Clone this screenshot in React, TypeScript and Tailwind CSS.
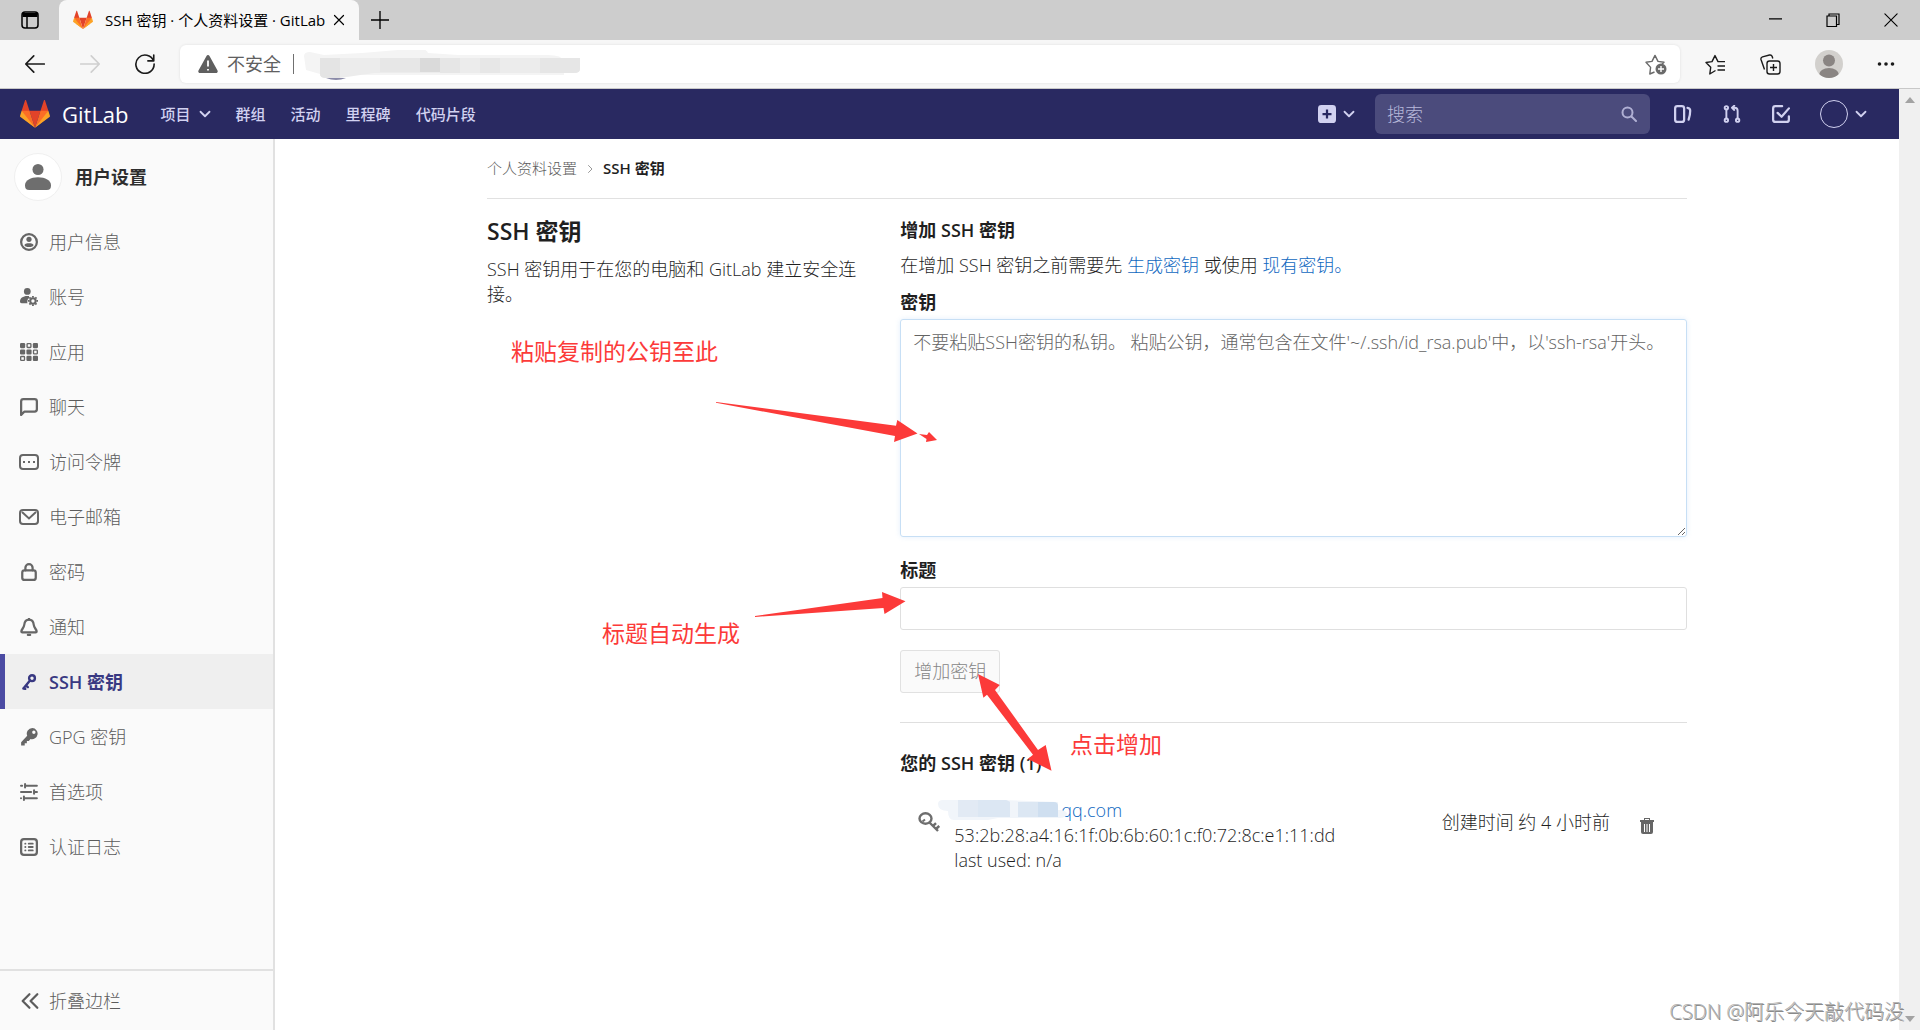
import type { ReactNode } from 'react';

const Tanuki = ({ className }: { className: string }) => (
    <svg viewBox="0 0 36 36" className={className} aria-hidden="true">
        <path fill="#e24329" d="M2 14l9.38 9v-9l-4-12.28c-.205-.632-1.176-.632-1.38 0z" />
        <path fill="#e24329" d="M34 14l-9.38 9v-9l4-12.28c.205-.632 1.176-.632 1.38 0z" />
        <path fill="#e24329" d="M18,34.38 11.38,14 24.62,14Z" />
        <path fill="#fc6d26" d="M18,34.38 11.38,14 2,14 6,25Z" />
        <path fill="#fc6d26" d="M18,34.38 24.62,14 34,14 30,25Z" />
        <path fill="#fca326" d="M2 14L.1 20.16c-.18.565 0 1.2.5 1.56l17.42 12.66z" />
        <path fill="#fca326" d="M34 14l1.9 6.16c.18.565 0 1.2-.5 1.56L18 34.38z" />
    </svg>
);

const Icon = ({ children, className = 'size-[18px]' }: { children: ReactNode; className?: string }) => (
    <svg viewBox="0 0 16 16" className={`shrink-0 ${className}`} fill="currentColor" aria-hidden="true">
        {children}
    </svg>
);

const Line = ({ children, className = 'size-[18px]', width = 2 }: { children: ReactNode; className?: string; width?: number }) => (
    <svg
        viewBox="0 0 16 16"
        className={`shrink-0 ${className}`}
        fill="none"
        stroke="currentColor"
        strokeWidth={width}
        strokeLinecap="round"
        strokeLinejoin="round"
        aria-hidden="true"
    >
        {children}
    </svg>
);

const Chevron = () => (
    <Line className="size-3" width={2.4}>
        <path d="M2 5l6 6 6-6" />
    </Line>
);

const sidebarLinks = [
    {
        name: '用户信息',
        icon: (
            <Icon>
                <circle cx="8" cy="8" r="7" fill="none" stroke="currentColor" strokeWidth="2" />
                <circle cx="8" cy="5.6" r="2.3" />
                <path d="M4 10.6C4 9.4 5.8 9 8 9s4 .4 4 1.6S10.2 12.5 8 12.5s-4-.7-4-1.9z" />
            </Icon>
        ),
    },
    {
        name: '账号',
        icon: (
            <Icon>
                <circle cx="6.5" cy="3" r="3" />
                <path d="M6.5 7C2.5 7 0 9 0 12c0 1 .5 1.5 1.5 1.5h5.2c-.6-1.5-.3-3.5 1.3-4.7V7z" />
                <circle cx="11.5" cy="11.5" r="2.4" fill="none" stroke="currentColor" strokeWidth="1.8" />
                <path
                    d="M11.5 7v9M7 11.5h9M8.3 8.3l6.4 6.4M14.7 8.3l-6.4 6.4"
                    fill="none"
                    stroke="currentColor"
                    strokeWidth="1.6"
                    strokeDasharray="1.4 6.2 1.4"
                />
            </Icon>
        ),
    },
    {
        name: '应用',
        icon: (
            <Icon>
                <rect width="4.6" height="4.6" rx="1" />
                <rect x="11.4" width="4.6" height="4.6" rx="1" />
                <rect y="5.7" width="4.6" height="4.6" rx="1" />
                <rect x="5.7" y="5.7" width="4.6" height="4.6" rx="1" />
                <rect x="5.7" y="11.4" width="4.6" height="4.6" rx="1" />
                <rect x="11.4" y="11.4" width="4.6" height="4.6" rx="1" />
                <g fill="none" stroke="currentColor" strokeWidth="1.2">
                    <rect x="6.3" y=".6" width="3.4" height="3.4" rx=".6" />
                    <rect x="12" y="6.3" width="3.4" height="3.4" rx=".6" />
                    <rect x=".6" y="12" width="3.4" height="3.4" rx=".6" />
                </g>
            </Icon>
        ),
    },
    {
        name: '聊天',
        icon: (
            <Line>
                <path d="M1 15V3a2 2 0 0 1 2-2h10a2 2 0 0 1 2 2v7a2 2 0 0 1-2 2H4z" />
            </Line>
        ),
    },
    {
        name: '访问令牌',
        icon: (
            <svg viewBox="0 0 20 16" className="h-4 w-5" fill="currentColor" aria-hidden="true">
                <rect x="1" y="1" width="18" height="14" rx="3" fill="none" stroke="currentColor" strokeWidth="2" />
                <rect x="4" y="7" width="2" height="2" />
                <rect x="9" y="7" width="2" height="2" />
                <rect x="14" y="7" width="2" height="2" />
            </svg>
        ),
    },
    {
        name: '电子邮箱',
        icon: (
            <svg viewBox="0 0 20 16" className="h-4 w-5" fill="none" stroke="currentColor" strokeWidth="2" aria-hidden="true">
                <rect x="1" y="1" width="18" height="14" rx="3" />
                <path d="M3 3l7 6.500L17 3" />
            </svg>
        ),
    },
    {
        name: '密码',
        icon: (
            <Line>
                <rect x="2" y="6.5" width="12" height="8.5" rx="2" />
                <path d="M4.8 6.5V4.200a3.200 3.200 0 0 1 6.400 0v2.300" />
            </Line>
        ),
    },
    {
        name: '通知',
        icon: (
            <Line>
                <path d="M8 1.5C5 1.5 4 4 3.8 6 3.5 9 1.2 10 1.2 12c0 .6.3.8.9.8h11.8c.6 0 .9-.2.9-.8 0-2-2.3-3-2.600-6C12 4 11 1.5 8 1.5z" />
                <path d="M7 15h2M8 .8v.7" />
            </Line>
        ),
    },
    {
        name: 'SSH 密钥',
        icon: (
            <Line className="size-4" width={2.4}>
                <circle cx="11" cy="4.2" r="2.9" />
                <path d="M9 6.5l-6.600 8M5 11.5l1.800 1.600M2.800 13.800l1.400 1.200" />
            </Line>
        ),
    },
    {
        name: 'GPG 密钥',
        icon: (
            <Icon>
                <path
                    fillRule="evenodd"
                    d="M11 0a5 5 0 0 0-4.6 6.9L1 12.600V15.500h3.200v-1.900h1.900v-2h1.800l1.400-1.800A5 5 0 1 0 11 0zm1.300 2.300a1.500 1.500 0 1 1 0 3 1.500 1.500 0 0 1 0-3z"
                />
            </Icon>
        ),
    },
    {
        name: '首选项',
        icon: (
            <Line width={1.8}>
                <path d="M.9 2.500h1M5 2.500h10M.9 8h9M13.500 8h1.600M.9 13.500h0M4 13.500h11M4.500 1v3M12.500 6.500v3M3.500 12v3" />
            </Line>
        ),
    },
    {
        name: '认证日志',
        icon: (
            <Line>
                <rect x="1" y="1" width="14" height="14" rx="2.5" />
                <path d="M4.700 5h.1M7.800 5h3.500M4.700 8h.1M7.800 8h3.500M4.700 11h.1M7.800 11h3.500" strokeWidth="1.7" />
            </Line>
        ),
    },
];

const BrowserTabs = () => (
    <div className="flex h-10 shrink-0 items-center bg-[#cdcdcd] text-black">
        <button aria-label="标签页操作" className="flex w-[59px] justify-center">
            <svg viewBox="0 0 18 18" className="size-[18px]" fill="none" stroke="black" strokeWidth="1.5">
                <rect x="1" y="1" width="16" height="16" rx="3" />
                <path d="M1.5 4h15" strokeWidth="4" />
                <path d="M6 6v11" />
            </svg>
        </button>
        <div className="flex h-full w-[300px] items-center rounded-t-lg bg-[#f7f7f7] px-[14px]">
            <Tanuki className="size-5 shrink-0" />
            <span className="ml-3 flex-1 text-[15px] whitespace-nowrap">SSH 密钥 · 个人资料设置 · GitLab</span>
            <button aria-label="关闭标签页">
                <Line className="size-3" width={1.6}>
                    <path d="M2 2l12 12M14 2L2 14" />
                </Line>
            </button>
        </div>
        <button aria-label="新建标签页" className="ml-3">
            <Line className="size-[18px]" width={1.2}>
                <path d="M8 0v16M0 8h16" />
            </Line>
        </button>
        <div className="ml-auto flex items-center gap-11 pr-[22px]">
            <button aria-label="最小化">
                <Line className="size-[13px]" width={1.3}>
                    <path d="M0 6h16" />
                </Line>
            </button>
            <button aria-label="还原">
                <svg viewBox="0 0 14 14" className="size-[14px]" fill="none" stroke="black" strokeWidth="1.2">
                    <path d="M1 3h9.500v10.500H1zM3 3V1h10v10.500h-2" />
                </svg>
            </button>
            <button aria-label="关闭">
                <Line className="size-[14px]" width={1.3}>
                    <path d="M1 1l14 14M15 1L1 15" />
                </Line>
            </button>
        </div>
    </div>
);

const AddressBar = () => (
    <div className="flex h-[49px] shrink-0 items-center border-b border-[#c8c8c8] bg-[#f7f7f7] text-[#1b1b1b]">
        <div className="flex w-[180px] items-center gap-[35px] pl-[25px]">
            <button aria-label="后退">
                <Line className="size-5" width={1.3}>
                    <path d="M15.500 8H.8M7 1.500L.6 8 7 14.500" />
                </Line>
            </button>
            <button aria-label="前进" className="text-[#cfcfcf]">
                <Line className="size-5" width={1.3}>
                    <path d="M.5 8h14.700M9 1.500L15.400 8 9 14.500" />
                </Line>
            </button>
            <button aria-label="刷新">
                <Line className="size-5" width={1.3}>
                    <path d="M14.800 5.500A7.300 7.300 0 1 0 15.300 8M15 .8v4.700h-4.700" />
                </Line>
            </button>
        </div>
        <div className="flex h-[38px] flex-1 items-center rounded-md bg-white pr-[13px] pl-[18px] text-[#606060] shadow-[0_0_3px_#0000001a]">
            <svg viewBox="0 0 20 18" className="h-[18px] w-5" aria-hidden="true">
                <path d="M8.500 1a1.700 1.700 0 0 1 3 0l8 14.500c.6 1.200 0 2.500-1.500 2.500H2c-1.500 0-2.100-1.300-1.500-2.500z" fill="#5f5f5f" />
                <path d="M10 5.500v6M10 14v1.500" stroke="white" strokeWidth="1.8" />
            </svg>
            <span className="ml-[9px] text-lg">不安全</span>
            <span className="ml-3 h-5 w-px bg-[#707070]" />
            {/* smudged-out host name */}
            <svg viewBox="0 0 276 32" className="mt-1 ml-[10px] h-8 w-[276px]" aria-hidden="true">
                <path d="M0 6q0-4 6-4l14 3 38-2 48-4q16-2 18 4l30 2h90q14 0 16 6v14H40L16 24l-14-4z" fill="#f4f4f4" />
                <path d="M16 8h260v11q0 4-6 4H70l-34 5H22q-6 0-6-4z" fill="#ececec" />
                <path d="M16 8h20v20H22q-6 0-6-4z" fill="#e4e4e4" />
                <path d="M76 8h40v14H76zM176 8h20v15h-20z" fill="#e7e7e7" />
                <path d="M116 8h20v14h-20z" fill="#dadada" />
                <path d="M136 8h20v15h-20zM236 8h40v11q0 4-6 4h-34z" fill="#e6e6e6" />
                <path d="M22 28q10 4 20 0z" fill="#8a8aa8" />
            </svg>
            <button aria-label="将此页面添加到收藏夹" className="ml-auto">
                <svg viewBox="0 0 22 22" className="size-[22px]" fill="none" stroke="#6a6a6a" strokeWidth="1.4">
                    <path d="M9.500 19l-4.700 2 .8-6.600L1 9.300l6-.9 3-6 3 6 6 .9-2 2" strokeLinejoin="round" />
                    <circle cx="16" cy="16" r="5.5" fill="#6a6a6a" stroke="none" />
                    <path d="M16 13v6M13 16h6" stroke="white" />
                </svg>
            </button>
        </div>
        <div className="flex w-60 items-center gap-[34px] pl-[25px]">
            <button aria-label="收藏夹">
                <svg viewBox="0 0 21 21" className="size-[21px]" fill="none" stroke="currentColor" strokeWidth="1.4" strokeLinejoin="round">
                    <path d="M10.500 16.500L4.800 20l.9-6.700L1 8.500l6-.9 3-6 3 6h7M12.500 12H20M12.500 16H20" />
                </svg>
            </button>
            <button aria-label="集锦">
                <svg viewBox="0 0 21 21" className="size-[21px]" fill="none" stroke="currentColor" strokeWidth="1.4">
                    <rect x="7" y="7" width="13" height="13" rx="2.5" />
                    <path d="M13.500 10v7M10 13.500h7M4.500 15.500L1 5.500q-.5-2 1.500-2.700l7-1.800q2-.4 2.700 1.500l.6 2" />
                </svg>
            </button>
            <button aria-label="个人资料">
                <svg viewBox="0 0 28 28" className="size-7">
                    <clipPath id="avatar">
                        <circle cx="14" cy="14" r="14" />
                    </clipPath>
                    <g clipPath="url(#avatar)">
                        <rect width="28" height="28" fill="#d2d0cd" />
                        <circle cx="14" cy="10.5" r="6" fill="#8a8583" />
                        <ellipse cx="14" cy="25" rx="10" ry="7" fill="#8a8583" />
                    </g>
                </svg>
            </button>
            <button aria-label="设置及其他">
                <svg viewBox="0 0 18 4" className="h-1 w-[18px]" fill="currentColor">
                    <circle cx="2.5" cy="2" r="1.8" />
                    <circle cx="9" cy="2" r="1.8" />
                    <circle cx="15.5" cy="2" r="1.8" />
                </svg>
            </button>
        </div>
    </div>
);

const Navbar = () => (
    <header className="flex h-[50px] shrink-0 items-center bg-[#292961] pr-8 pl-5 text-[#d1d1f0]">
        <a href="#" className="flex items-center">
            <Tanuki className="size-[30px]" />
            <span className="ml-3 text-[22px] font-medium text-white">GitLab</span>
        </a>
        <nav className="ml-8 flex items-center gap-[25px] text-[15px] font-medium">
            <a href="#" className="flex items-center gap-2">
                项目
                <Chevron />
            </a>
            <a href="#">群组</a>
            <a href="#">活动</a>
            <a href="#">里程碑</a>
            <a href="#">代码片段</a>
        </nav>
        <div className="ml-auto flex items-center">
            <button aria-label="新建" className="flex items-center gap-[7px]">
                <Icon>
                    <path fillRule="evenodd" d="M3 0h10a3 3 0 0 1 3 3v10a3 3 0 0 1-3 3H3a3 3 0 0 1-3-3V3a3 3 0 0 1 3-3zm4 4v3H4v2h3v3h2V9h3V7H9V4z" />
                </Icon>
                <Chevron />
            </button>
            <label className="ml-5 flex h-10 w-[275px] items-center rounded-md bg-[#4b4b7c] pr-[13px] pl-3">
                <input
                    type="text"
                    aria-label="搜索"
                    placeholder="搜索"
                    className="min-w-0 flex-1 bg-transparent text-lg font-light outline-none placeholder:text-[#b8b8da]"
                />
                <Line className="size-4 text-[#b0b0d4]">
                    <circle cx="6.5" cy="6.5" r="5" />
                    <path d="M10.500 10.500L15 15" />
                </Line>
            </label>
            <div className="ml-6 flex items-center gap-[31px]">
                <a href="#" aria-label="议题">
                    <Line>
                        <rect x="1" y="1" width="8" height="14" rx="2" />
                        <path d="M12 2.500c1.600.3 2.400.9 2.400 2.500 0 3-.6 5.500-1.400 8" />
                    </Line>
                </a>
                <a href="#" aria-label="合并请求">
                    <Line width={1.7}>
                        <circle cx="3" cy="2.5" r="1.5" />
                        <circle cx="3" cy="13.5" r="1.5" />
                        <circle cx="13" cy="13.5" r="1.5" />
                        <path d="M3 4v8M13 12V5q0-2.500-2.500-2.500H8.500M10 .6L8 2.500l2 1.900" />
                    </Line>
                </a>
                <a href="#" aria-label="待办事项">
                    <Line>
                        <path d="M9 1H3a2 2 0 0 0-2 2v10a2 2 0 0 0 2 2h10a2 2 0 0 0 2-2v-3M5 7l3.500 3.500L15 3" />
                    </Line>
                </a>
            </div>
            <button aria-label="用户菜单" className="ml-[30px] flex items-center gap-[7px]">
                <span className="size-7 rounded-full border border-[#d1d1f0]" />
                <Chevron />
            </button>
        </div>
    </header>
);

const Sidebar = () => (
    <aside className="flex w-[275px] shrink-0 flex-col border-r-2 border-[#e1e1e1] bg-[#fafafa] text-lg font-light text-[#5c5c5c]">
        <a href="#" className="flex h-[75px] items-center gap-[13px] pl-[14px] font-bold text-[#2e2e2e]">
            <span className="flex size-12 items-center justify-center rounded-full border border-[#f0f0f0] bg-white text-[#6e6e6e]">
                <Icon className="size-[26px]">
                    <circle cx="8" cy="3.4" r="3.4" />
                    <path d="M0 13c0-3 3.500-4.900 8-4.900s8 1.900 8 4.900c0 2-.8 3-2.600 3H2.600C.8 16 0 15 0 13z" />
                </Icon>
            </span>
            用户设置
        </a>
        <nav className="flex-1">
            <ul>
                {sidebarLinks.map(({ name, icon }) => (
                    <li key={name}>
                        <a
                            href="#"
                            className={`flex h-[55px] items-center border-l-[5px] pl-[14px] ${
                                name === 'SSH 密钥' ? 'border-[#4b4ba3] bg-[#efefef] font-semibold text-[#393982]' : 'border-transparent'
                            }`}
                        >
                            <span className={`mr-[10px] flex w-5 justify-center ${name === 'SSH 密钥' ? '' : 'text-[#666]'}`}>{icon}</span>
                            {name}
                        </a>
                    </li>
                ))}
            </ul>
        </nav>
        <button className="flex h-[61px] items-center gap-[10px] border-t-2 border-[#e1e1e1] pl-[21px]">
            <Line>
                <path d="M7.500 2L1.500 8l6 6M14.500 2l-6 6 6 6" />
            </Line>
            折叠边栏
        </button>
    </aside>
);

const Notes = () => (
    <div className="pointer-events-none absolute inset-0 text-[23px] leading-8 font-normal text-[#fc3a39]">
        <p className="absolute top-[196px] left-6">粘贴复制的公钥至此</p>
        <p className="absolute top-[478px] left-[115px]">标题自动生成</p>
        <p className="absolute top-[589px] left-[583px]">点击增加</p>
        <svg viewBox="716 400 222 44" className="absolute top-[261px] left-[229px] h-11 w-[222px]" fill="currentColor">
            <path d="M716 402L896 425.700 897.300 420 917.500 433.500 894 442 895 436 716 402.800z" />
            <path d="M919 434L927 435 929 432 937 440 926 442 926.500 439z" />
        </svg>
        <svg viewBox="754 590 152 28" className="absolute top-[451px] left-[267px] h-7 w-[152px]" fill="currentColor">
            <path d="M755 616L882.500 598 882 592 905.500 601.300 884.500 614 883.500 608 755 617z" />
        </svg>
        <svg viewBox="978 674 74 98" className="absolute top-[535px] left-[491px] h-[98px] w-[74px]" fill="currentColor">
            <path d="M978 674L999.800 685 995 690 1038 750 1045.700 745 1051.500 770.700 1027.800 759 1033 754.700 987 694.700 983.400 697.700z" />
        </svg>
    </div>
);

const SshKeys = () => (
    <main className="min-w-0 flex-1 bg-white text-lg leading-[25px] font-light text-[#1f1f1f]">
        <div className="relative mx-auto max-w-[1200px]">
            <nav className="flex h-[60px] items-center gap-[9px] border-b border-[#e1e1e1] text-[15px]">
                <a href="#" className="text-[#5c5c5c]">
                    个人资料设置
                </a>
                <Line className="size-2 text-[#999]">
                    <path d="M5 1l7 7-7 7" />
                </Line>
                <a href="#" className="font-semibold">
                    SSH 密钥
                </a>
            </nav>
            <div className="grid grid-cols-[1fr_2fr] gap-5">
                <section className="pt-[18px]">
                    <h4 className="text-[23px] leading-7 font-semibold">SSH 密钥</h4>
                    <p className="mt-3">SSH 密钥用于在您的电脑和 GitLab 建立安全连接。</p>
                </section>
                <section className="pt-[19px]">
                    <h5 className="font-semibold">增加 SSH 密钥</h5>
                    <p className="mt-[10px]">
                        在增加 SSH 密钥之前需要先{' '}
                        <a href="#" className="text-[#1068bf]">
                            生成密钥
                        </a>{' '}
                        或使用{' '}
                        <a href="#" className="text-[#1068bf]">
                            现有密钥。
                        </a>
                    </p>
                    <form>
                        <label htmlFor="key" className="mt-3 block font-semibold">
                            密钥
                        </label>
                        <textarea
                            id="key"
                            placeholder="不要粘贴SSH密钥的私钥。 粘贴公钥，通常包含在文件'~/.ssh/id_rsa.pub'中，以'ssh-rsa'开头。"
                            className="mt-1 block h-[218px] w-full rounded-[3px] border border-[#c7dff5] px-3 py-[10px] shadow-[0_0_5px_#73afea33] outline-none placeholder:text-[#636363]"
                        />
                        <label htmlFor="title" className="mt-[21px] block font-semibold">
                            标题
                        </label>
                        <input id="title" type="text" className="mt-1 block h-[43px] w-full rounded-[3px] border border-[#dfdfdf] px-3 outline-none" />
                        <button type="button" disabled className="mt-5 h-[43px] rounded-[3px] border border-[#e1e1e1] bg-[#fafafa] px-[13px] text-[#868686]">
                            增加密钥
                        </button>
                    </form>
                    <hr className="mt-[29px] border-[#dfdfdf]" />
                    <h5 className="mt-7 font-semibold">您的 SSH 密钥 (1)</h5>
                    <ul className="mt-[22px]">
                        <li className="flex items-start pr-[33px] pl-[18px]">
                            <svg viewBox="0 0 22 20" className="mt-[14px] h-5 w-[22px] text-[#6e6e6e]" fill="none" stroke="currentColor" strokeWidth="2.4">
                                <ellipse cx="7.5" cy="6.5" rx="6" ry="5.2" />
                                <path d="M11.500 10.500l8.500 8.500M15 14l3-2.800M18 17l3.200-3" />
                                <path d="M4.500 9.500l2.500-2" strokeWidth="2" />
                            </svg>
                            <div className="relative ml-[14px]">
                                <a href="#" className="block pl-[107px] text-[#1068bf]">
                                    qq.com
                                </a>
                                {/* smudged-out account name */}
                                <svg viewBox="0 0 130 23" className="absolute top-px -left-4 h-[23px] w-[130px]" aria-hidden="true">
                                    <path d="M0 5q0-4 5-4h60l55 2v8q9 0 9 4t-9 4H60l-10 2H16q-6 0-6-9-10 0-10-7z" fill="#f1f5fa" />
                                    <path d="M20 1h48l4 2v15H20z" fill="#e2eaf4" />
                                    <path d="M40 1h28l4 2v15H40zM80 3h20v15H80z" fill="#dce7f3" />
                                    <path d="M100 3h16q4 0 4 4v11h-20z" fill="#cfdff0" />
                                </svg>
                                <p>53:2b:28:a4:16:1f:0b:6b:60:1c:f0:72:8c:e1:11:dd</p>
                                <p>last used: n/a</p>
                            </div>
                            <span className="mt-3 ml-auto">创建时间 约 4 小时前</span>
                            <button aria-label="删除" className="mt-5 ml-[30px] text-[#666]">
                                <svg viewBox="0 0 14 16" className="h-4 w-[14px]" fill="currentColor">
                                    <path d="M4 0h6v2h4v2H0V2h4zM5 1v1h4V1z" fillRule="evenodd" />
                                    <path d="M1 4h12v10q0 2-2 2H3q-2 0-2-2z" />
                                    <path d="M4.500 6v8M7 6v8M9.500 6v8" stroke="white" />
                                </svg>
                            </button>
                        </li>
                    </ul>
                </section>
            </div>
            <Notes />
        </div>
    </main>
);

const App = () => (
    <div className="relative flex min-h-screen flex-col overflow-hidden bg-white font-['Open_Sans','Noto_Sans_CJK_SC',sans-serif]">
        <BrowserTabs />
        <AddressBar />
        <div className="flex flex-1">
            <div className="flex min-w-0 flex-1 flex-col">
                <Navbar />
                <div className="flex flex-1">
                    <Sidebar />
                    <SshKeys />
                </div>
            </div>
            {/* page scrollbar */}
            <div className="flex w-[21px] flex-col items-center justify-between bg-[#f0f0f0] pt-2 pb-2 text-[#a3a3a3]">
                <svg viewBox="0 0 10 6" className="h-[6px] w-[10px]" fill="currentColor">
                    <path d="M0 6l5-6 5 6z" />
                </svg>
                <svg viewBox="0 0 10 6" className="h-[6px] w-[10px]" fill="currentColor">
                    <path d="M0 0l5 6 5-6z" />
                </svg>
            </div>
        </div>
        <p className="absolute right-4 bottom-1 text-xl font-light text-[#b4b4b4] [text-shadow:1px_1px_0_#8a8a8a]">CSDN @阿乐今天敲代码没</p>
    </div>
);

export default App;
